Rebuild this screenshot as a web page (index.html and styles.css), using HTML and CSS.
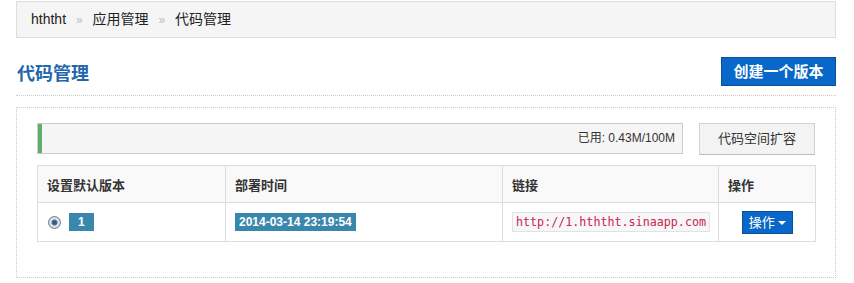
FILE: index.html
```html
<!DOCTYPE html>
<html lang="zh-CN">
<head>
    <meta charset="UTF-8">
    <title>代码管理</title>
    <link rel="stylesheet" href="styles.css">
</head>
<body>
    <div class="page">
        <div class="breadcrumb">
            <span>hththt</span>
            <span class="divider">»</span>
            <span>应用管理</span>
            <span class="divider">»</span>
            <span>代码管理</span>
        </div>

        <div class="page-header">
            <h2>代码管理</h2>
            <a class="btn btn-primary btn-create">创建一个版本</a>
        </div>

        <div class="panel">
            <div class="quota">
                <div class="progress">
                    <div class="progress__bar"></div>
                    <span class="progress__text">已用: 0.43M/100M</span>
                </div>
                <a class="btn btn-default">代码空间扩容</a>
            </div>

            <table class="table">
                <thead>
                    <tr>
                        <th class="col-default">设置默认版本</th>
                        <th class="col-time">部署时间</th>
                        <th class="col-link">链接</th>
                        <th class="col-op">操作</th>
                    </tr>
                </thead>
                <tbody>
                    <tr>
                        <td><span class="radio"></span><span class="label">1</span></td>
                        <td><span class="label label-bold">2014-03-14 23:19:54</span></td>
                        <td><code>http://1.hththt.sinaapp.com</code></td>
                        <td class="center"><a class="btn btn-primary btn-small">操作 <span class="caret"></span></a></td>
                    </tr>
                </tbody>
            </table>
        </div>
    </div>
</body>
</html>
```

FILE: styles.css
```css
body {
    margin: 0;
    font-family: "Liberation Sans", Arial, "Noto Sans CJK SC", sans-serif;
    font-size: 13px;
    color: #333;
    background: #fff;
}

.page {
    width: 820px;
    margin-left: 16px;
    padding-top: 1px;
}

.breadcrumb {
    height: 35px;
    line-height: 35px;
    padding-left: 14px;
    background-color: #f5f5f5;
    border: 1px solid #ddd;
    font-size: 14px;
    color: #222;
}

.breadcrumb .divider {
    color: #bbb;
    margin: 0 6px;
    font-size: 12px;
}

.page-header {
    display: flex;
    align-items: center;
    justify-content: space-between;
    margin-top: 19px;
    padding-bottom: 9px;
    border-bottom: 1px dotted #ccc;
}

.page-header h2 {
    margin: 0;
    padding-left: 1px;
    font-size: 18px;
    font-weight: bold;
    color: #2465ac;
}

.btn {
    display: inline-block;
    box-sizing: border-box;
    text-align: center;
    cursor: pointer;
}

.btn-primary {
    background-color: #0867c8;
    border: 1px solid #0b4f96;
    color: #fff;
}

.btn-create {
    width: 115px;
    height: 29px;
    line-height: 27px;
    font-size: 15px;
    font-weight: bold;
}

.panel {
    margin-top: 11px;
    height: 171px;
    box-sizing: border-box;
    border: 1px dotted #ccc;
    padding: 15px 20px 0 20px;
}

.quota {
    display: flex;
    align-items: flex-start;
    justify-content: space-between;
}

.progress {
    position: relative;
    width: 646px;
    height: 31px;
    box-sizing: border-box;
    background-color: #f5f5f5;
    border: 1px solid #ccc;
    text-align: right;
    padding-right: 7px;
    line-height: 29px;
    font-size: 12px;
}

.progress__bar {
    position: absolute;
    left: 0;
    top: 0;
    bottom: 0;
    width: 4px;
    background-color: #5fae6c;
}

.btn-default {
    width: 116px;
    height: 32px;
    line-height: 30px;
    background-color: #f3f3f3;
    border: 1px solid #d2d2d2;
    border-bottom-color: #bbb;
    font-size: 13px;
    color: #333;
}

.table {
    margin-top: 10px;
    width: 778px;
    border-collapse: collapse;
    table-layout: fixed;
}

.table th,
.table td {
    box-sizing: border-box;
    border: 1px solid #ddd;
    text-align: left;
    padding: 0 9px;
}

.table th {
    height: 37px;
    background-color: #f9f9f9;
    font-weight: bold;
    font-size: 13px;
}

.table td {
    height: 39px;
}

.col-default { width: 188px; }
.col-time { width: 277px; }
.col-link { width: 216px; }
.col-op { width: 97px; }

.table td.center {
    text-align: center;
}

.radio {
    display: inline-block;
    vertical-align: middle;
    box-sizing: border-box;
    width: 13px;
    height: 13px;
    border-radius: 50%;
    border: 1px solid #7d7d7d;
    background: radial-gradient(circle, #2a4f7a 0, #3a6ea0 2.5px, #e6ebf0 3.5px, #c4ccd4 6px);
    margin-right: 8px;
    margin-left: 1px;
}

.label {
    display: inline-block;
    vertical-align: middle;
    background-color: #3a87ad;
    color: #fff;
    font-weight: bold;
    font-size: 12px;
    line-height: 18px;
    padding: 0 9px;
}

.label-bold {
    padding: 0 4px;
}

code {
    display: inline-block;
    vertical-align: middle;
    font-family: "DejaVu Sans Mono", "Liberation Mono", monospace;
    font-size: 11.7px;
    color: #c7254e;
    background-color: #f7f7f9;
    border: 1px solid #e1e1e8;
    padding: 2px 3px;
    line-height: 14px;
}

.btn-small {
    height: 23px;
    line-height: 21px;
    padding: 0 6px;
    font-size: 13px;
    margin-left: 1px;
}

.caret {
    display: inline-block;
    vertical-align: middle;
    width: 0;
    height: 0;
    border-left: 4px solid transparent;
    border-right: 4px solid transparent;
    border-top: 4px solid #fff;
}
```
